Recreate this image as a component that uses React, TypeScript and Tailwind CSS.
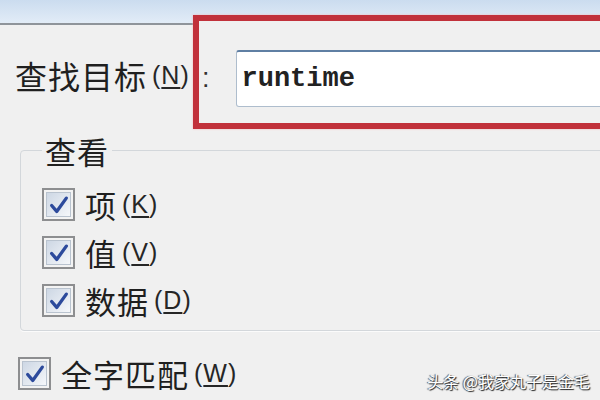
import React from "react";

function Check() {
    return (
        <div className="w-[33px] h-[33px] shrink-0 border-2 border-[#8d8e90] bg-[#f3f3f3] p-[2px]">
            <div className="w-full h-full border border-[#b9c3cf] bg-gradient-to-br from-[#cdd7e4] to-[#f5f7fa] flex items-center justify-center">
                <svg viewBox="0 0 24 24" className="w-[22px] h-[22px]">
                    <path
                        d="M4 12.5 L9.5 19 L20 4.5"
                        fill="none"
                        stroke="#2c4a9c"
                        strokeWidth="3.6"
                        strokeLinecap="round"
                        strokeLinejoin="round"
                    />
                </svg>
            </div>
        </div>
    );
}

function Key({ k }: { k: string }) {
    return (
        <span className="ml-[5px] text-[25px] tracking-[1px] font-['Liberation_Sans',sans-serif] text-[#262626]">
            (<span className="underline underline-offset-[3px]">{k}</span>)
        </span>
    );
}

function Option({ label, k }: { label: string; k: string }) {
    return (
        <div className="flex items-center gap-[10px] h-[33px]">
            <Check />
            <span className="flex items-center leading-none">
                <span className="text-[31px] tracking-[1px]">{label}</span>
                <Key k={k} />
            </span>
        </div>
    );
}

export default function App() {
    return (
        <div className="relative w-[600px] h-[400px] overflow-hidden bg-[#f0f0f0] text-[#1f1f1f] font-['Noto_Sans_CJK_SC','Liberation_Sans',sans-serif]">
            {/* title strip */}
            <div className="h-[25px] bg-gradient-to-b from-[#cbdcef] to-[#e2ecf7] border-b-2 border-[#8f949a]" />

            {/* find target row */}
            <div className="flex items-start -mt-[10px]">
                <div className="w-[193px] shrink-0 pl-[15px] pt-[44px] flex items-center leading-none whitespace-nowrap">
                    <span className="text-[32px] tracking-[1px]">查找目标</span>
                    <Key k="N" />
                </div>
                <div className="relative z-10 w-[430px] shrink-0 h-[114px] border-[6px] border-r-0 border-[#c1313b] bg-[#f0f0f0] shadow-[0_0_2px_#f3b7bc] flex items-start">
                    <span className="mt-[44px] ml-[3px] text-[27px] leading-none font-['Liberation_Sans',sans-serif] text-[#333]">:</span>
                    <div className="ml-[26px] mt-[29px] w-[400px] h-[57px] bg-white border border-[#aebdcd] border-t-2 border-t-[#5f7fa3] rounded-[3px] flex items-center pl-[5px]">
                        <span className="text-[27px] font-bold leading-none text-[#222] font-['Liberation_Mono',monospace]">runtime</span>
                    </div>
                </div>
            </div>

            {/* look at group */}
            <fieldset className="ml-[20px] w-[620px] mt-[6px] border border-[#d3d7db] rounded-[4px] shadow-[0_1px_0_#fbfbfb] pl-[21px] pb-[13px]">
                <legend className="px-[3px] text-[31px] tracking-[1px] leading-none">查看</legend>
                <div className="flex flex-col gap-[15px] mt-[22px]">
                    <Option label="项" k="K" />
                    <Option label="值" k="V" />
                    <Option label="数据" k="D" />
                </div>
            </fieldset>

            <div className="mt-[26px] ml-[18px]">
                <Option label="全字匹配" k="W" />
            </div>

            {/* watermark */}
            <div className="absolute right-[10px] bottom-[11px] text-[16px] leading-none text-white whitespace-nowrap [text-shadow:1px_1px_1px_#222,-1px_0_1px_#444]">
                头条 @我家丸子是金毛
            </div>
        </div>
    );
}
